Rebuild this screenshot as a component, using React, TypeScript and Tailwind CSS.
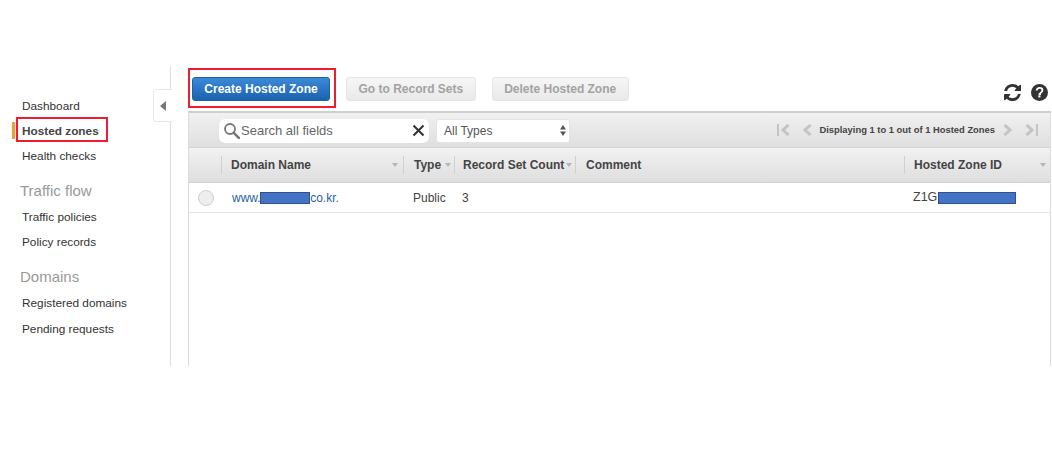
import React from 'react';

const font = { fontFamily: '"Liberation Sans", Arial, sans-serif' };

const SortArrow = () => (
  <svg width="6" height="4" viewBox="0 0 6 4" className="shrink-0">
    <path d="M0 0h6L3 4z" fill="#b5b5b5" />
  </svg>
);

const Redacted = ({ className }: { className: string }) => (
  <span className={`inline-block h-[12px] bg-[#4472c4] border border-[#2f528f] ${className}`} />
);

const NavItem = ({ label, active }: { label: string; active?: boolean }) => (
  <div className={`h-[25.3px] flex items-center pl-[22px] text-[11.8px] text-[#333] ${active ? 'font-bold text-[#444]' : ''}`}>
    {label}
  </div>
);

const NavHeading = ({ label }: { label: string }) => (
  <div className="h-[26px] mt-[9.5px] pb-[2px] flex items-center pl-[20px] text-[15px] text-[#999]">{label}</div>
);

const ActionButton = ({ label }: { label: string }) => (
  <button className="h-[24px] px-[11.5px] whitespace-nowrap rounded-[3px] border border-[#e6e6e6] bg-gradient-to-b from-[#f6f6f6] to-[#e9e9e9] text-[12px] font-bold text-[#a3a3a3]">
    {label}
  </button>
);

const Pager = () => (
  <div className="flex items-center">
    <svg width="14" height="12" viewBox="0 0 14 12" className="mr-[13px]">
      <path d="M1 0h2v12H1z" fill="#c4c4c4" />
      <path d="M12.500 1 7 6l5.500 5" fill="none" stroke="#c4c4c4" strokeWidth="3" />
    </svg>
    <svg width="9" height="12" viewBox="0 0 9 12" className="mr-[7px]">
      <path d="M7.500 1 2 6l5.500 5" fill="none" stroke="#c4c4c4" strokeWidth="3" />
    </svg>
    <span className="text-[9.4px] font-bold text-[#444] whitespace-nowrap">Displaying 1 to 1 out of 1 Hosted Zones</span>
    <svg width="9" height="12" viewBox="0 0 9 12" className="ml-[8px]">
      <path d="M1.500 1 7 6l-5.500 5" fill="none" stroke="#c4c4c4" strokeWidth="3" />
    </svg>
    <svg width="14" height="12" viewBox="0 0 14 12" className="ml-[13px]">
      <path d="M11 0h2v12h-2z" fill="#c4c4c4" />
      <path d="M1.500 1 7 6l-5.500 5" fill="none" stroke="#c4c4c4" strokeWidth="3" />
    </svg>
  </div>
);

const App: React.FC = () => {
  return (
    <div className="w-[1052px] h-[462px] bg-white pt-[66px] overflow-hidden" style={font}>
      <div className="flex h-[300px]">
        {/* left nav */}
        <aside className="relative w-[171px] shrink-0 border-r border-[#dedede] pt-[28px]">
          <NavItem label="Dashboard" />
          <div className="relative">
            <span className="absolute left-[12px] top-[3px] h-[17px] w-[3px] bg-[#f59b34]" />
            <NavItem label="Hosted zones" active />
            <span className="absolute left-[16px] top-[-2px] w-[92px] h-[25px] border-2 border-[#ed1c2e]" />
          </div>
          <NavItem label="Health checks" />
          <NavHeading label="Traffic flow" />
          <NavItem label="Traffic policies" />
          <NavItem label="Policy records" />
          <NavHeading label="Domains" />
          <NavItem label="Registered domains" />
          <NavItem label="Pending requests" />
          <div className="absolute left-[153px] top-[23px] w-[19px] h-[33px] bg-white border border-r-0 border-[#e8e8e8] rounded-l-[3px] flex items-center justify-center">
            <svg width="6" height="10" viewBox="0 0 6 10">
              <path d="M6 0v10L0 5z" fill="#777" />
            </svg>
          </div>
        </aside>

        <main className="flex-1 min-w-0 pl-[17px] pr-[1px] flex flex-col">
          {/* action bar */}
          <div className="relative h-[45px] shrink-0 pt-[11px] pl-[4px] flex items-start">
            <button className="h-[24px] w-[138px] rounded-[3px] border border-[#1c62a8] bg-gradient-to-b from-[#3b8ad8] to-[#1a62b0] text-[12px] font-bold text-white whitespace-nowrap">
              Create Hosted Zone
            </button>
            <span className="absolute left-0 top-[2px] w-[148px] h-[40px] border-2 border-[#ed1c2e]" />
            <div className="ml-[16px] flex gap-[16px]">
              <ActionButton label="Go to Record Sets" />
              <ActionButton label="Delete Hosted Zone" />
            </div>
            <div className="ml-auto mr-[3px] mt-[7px] flex items-center gap-[10px]">
              <svg width="17" height="17" viewBox="0 0 1536 1536">
                <path
                  fill="#333"
                  d="M1511 928q0 5-1 7-64 268-268 434.500T764 1536q-146 0-282.500-55T238 1324l-129 129q-19 19-45 19t-45-19-19-45V960q0-26 19-45t45-19h448q26 0 45 19t19 45-19 45l-137 137q71 66 161 102t187 36q134 0 250-65t186-179q11-17 53-117 8-23 30-23h192q13 0 22.500 9.500t9.500 22.500zm25-800v448q0 26-19 45t-45 19h-448q-26 0-45-19t-19-45 19-45l138-138Q969 256 768 256q-134 0-250 65T332 500q-11 17-53 117-8 23-30 23H50q-13 0-22.500-9.500T18 608v-7q65-268 270-434.500T768 0q146 0 284 55.500T1297 212l130-129q19-19 45-19t45 19 19 45z"
                />
              </svg>
              <svg width="17" height="17" viewBox="0 0 24 24">
                <circle cx="12" cy="12" r="12" fill="#333" />
                <path d="M8 9.200c0-2.300 1.800-3.700 4.100-3.700 2.200 0 4 1.300 4 3.400 0 2.900-3.400 2.900-3.400 5.300h-1.900" fill="none" stroke="#fff" strokeWidth="2.600" />
                <rect x="10.300" y="16" width="3" height="3" fill="#fff" />
              </svg>
            </div>
          </div>

          {/* table panel */}
          <div className="flex-1 border-x border-t-2 border-x-[#dcdcdc] border-t-[#cfcfcf] bg-white min-h-0">
            <div className="h-[35px] pt-[1px] flex items-center bg-gradient-to-b from-[#f1f1f1] to-[#dfdfdf] border-b border-[#d2d2d2] pl-[30px] pr-[11px]">
              <div className="relative w-[210px] h-[24px] bg-white rounded-[6px] flex items-center pl-[4px] text-[13px] text-[#666]">
                <svg width="17" height="17" viewBox="0 0 17 17" className="mr-[1px]">
                  <circle cx="7" cy="7" r="5" fill="none" stroke="#777" strokeWidth="1.800" />
                  <path d="m10.800 10.800 5 5" stroke="#777" strokeWidth="2.600" strokeLinecap="round" />
                </svg>
                Search all fields
                <svg width="13" height="13" viewBox="0 0 13 13" className="absolute right-[4px] top-[5px]">
                  <path d="m1.500 1.500 10 10m0-10-10 10" stroke="#333" strokeWidth="2" />
                </svg>
              </div>
              <div className="ml-[7px] w-[134px] h-[24px] bg-white rounded-[3px] border border-[#e3e3e3] flex items-center justify-between pl-[7px] pr-[3px] text-[12px] text-[#555]">
                All Types
                <svg width="6" height="11" viewBox="0 0 6 11">
                  <path d="M3 0l3 4.500H0zM3 11 0 6.500h6z" fill="#555" />
                </svg>
              </div>
              <div className="ml-auto">
                <Pager />
              </div>
            </div>

            {/* header row */}
            <div className="h-[35px] flex items-center bg-gradient-to-b from-[#f2f2f2] to-[#dedede] border-b border-[#d2d2d2] text-[12px] font-bold text-[#444] whitespace-nowrap">
              <div className="w-[33px] h-[18px] border-r border-[#d0d0d0]" />
              <div className="w-[182px] h-[18px] flex items-center justify-between pl-[9px] pr-[5px] border-r border-[#d0d0d0]">
                Domain Name <SortArrow />
              </div>
              <div className="w-[51px] h-[18px] flex items-center gap-[4px] pl-[10px] border-r border-[#d0d0d0]">
                Type <SortArrow />
              </div>
              <div className="w-[121px] h-[18px] flex items-center gap-[2px] pl-[8px] border-r border-[#d0d0d0]">
                Record Set Count <SortArrow />
              </div>
              <div className="w-[329px] h-[18px] flex items-center pl-[10px] border-r border-[#d0d0d0]">Comment</div>
              <div className="flex-1 h-[18px] flex items-center justify-between pl-[9px] pr-[4px]">
                Hosted Zone ID <SortArrow />
              </div>
            </div>

            {/* data row */}
            <div className="h-[30px] flex items-center border-b border-[#e4e4e4] text-[12px] text-[#444]">
              <div className="w-[33px] flex justify-center">
                <span className="block w-[16px] h-[16px] rounded-full bg-[#eeeeee] border border-[#cfcfcf]" />
              </div>
              <div className="w-[182px] pl-[10px] flex items-center text-[#2a5fa8]">
                www.
                <Redacted className="w-[50px] -ml-[1px] mr-[0.500px]" />
                co.kr.
              </div>
              <div className="w-[51px] pl-[9px]">Public</div>
              <div className="w-[121px] pl-[7px]">3</div>
              <div className="w-[329px]" />
              <div className="flex-1 pl-[8px] flex items-center text-[12.500px]">
                Z1G
                <Redacted className="w-[78px] ml-[1px]" />
              </div>
            </div>
          </div>
        </main>
      </div>
    </div>
  );
};

export default App;
